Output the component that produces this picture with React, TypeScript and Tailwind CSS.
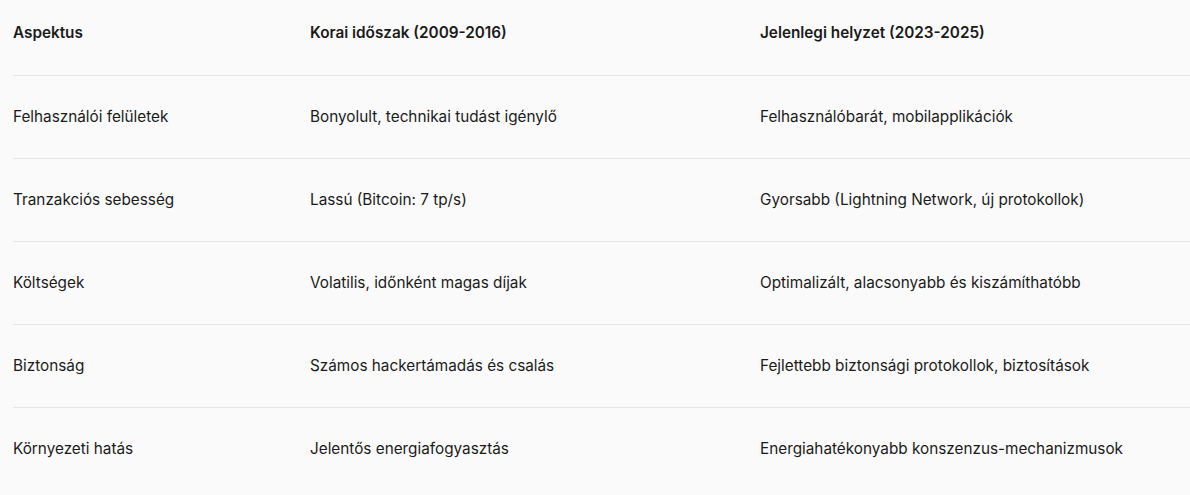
import React from 'react';

const rows: [string, string, string][] = [
  ['Felhasználói felületek', 'Bonyolult, technikai tudást igénylő', 'Felhasználóbarát, mobilapplikációk'],
  ['Tranzakciós sebesség', 'Lassú (Bitcoin: 7 tp/s)', 'Gyorsabb (Lightning Network, új protokollok)'],
  ['Költségek', 'Volatilis, időnként magas díjak', 'Optimalizált, alacsonyabb és kiszámíthatóbb'],
  ['Biztonság', 'Számos hackertámadás és csalás', 'Fejlettebb biztonsági protokollok, biztosítások'],
  ['Környezeti hatás', 'Jelentős energiafogyasztás', 'Energiahatékonyabb konszenzus-mechanizmusok'],
];

const cols = 'grid grid-cols-[297px_450px_1fr]';

export default function App() {
  return (
    <div className="min-h-screen w-full bg-[#fafafa] pl-[13px] text-[15.3px] text-[#1a1a1a] font-['Inter',sans-serif]">
      {/* Header */}
      <div className={`${cols} h-[76px] border-b border-[#e6e6e6] pb-[8px] items-center font-semibold`}>
        <div>Aspektus</div>
        <div>Korai időszak (2009-2016)</div>
        <div>Jelenlegi helyzet (2023-2025)</div>
      </div>

      {rows.map((r, i) => (
        <div
          key={i}
          className={`${cols} h-[83px] items-center ${i < rows.length - 1 ? 'border-b border-[#e6e6e6]' : ''}`}
        >
          <div>{r[0]}</div>
          <div>{r[1]}</div>
          <div>{r[2]}</div>
        </div>
      ))}
    </div>
  );
}
